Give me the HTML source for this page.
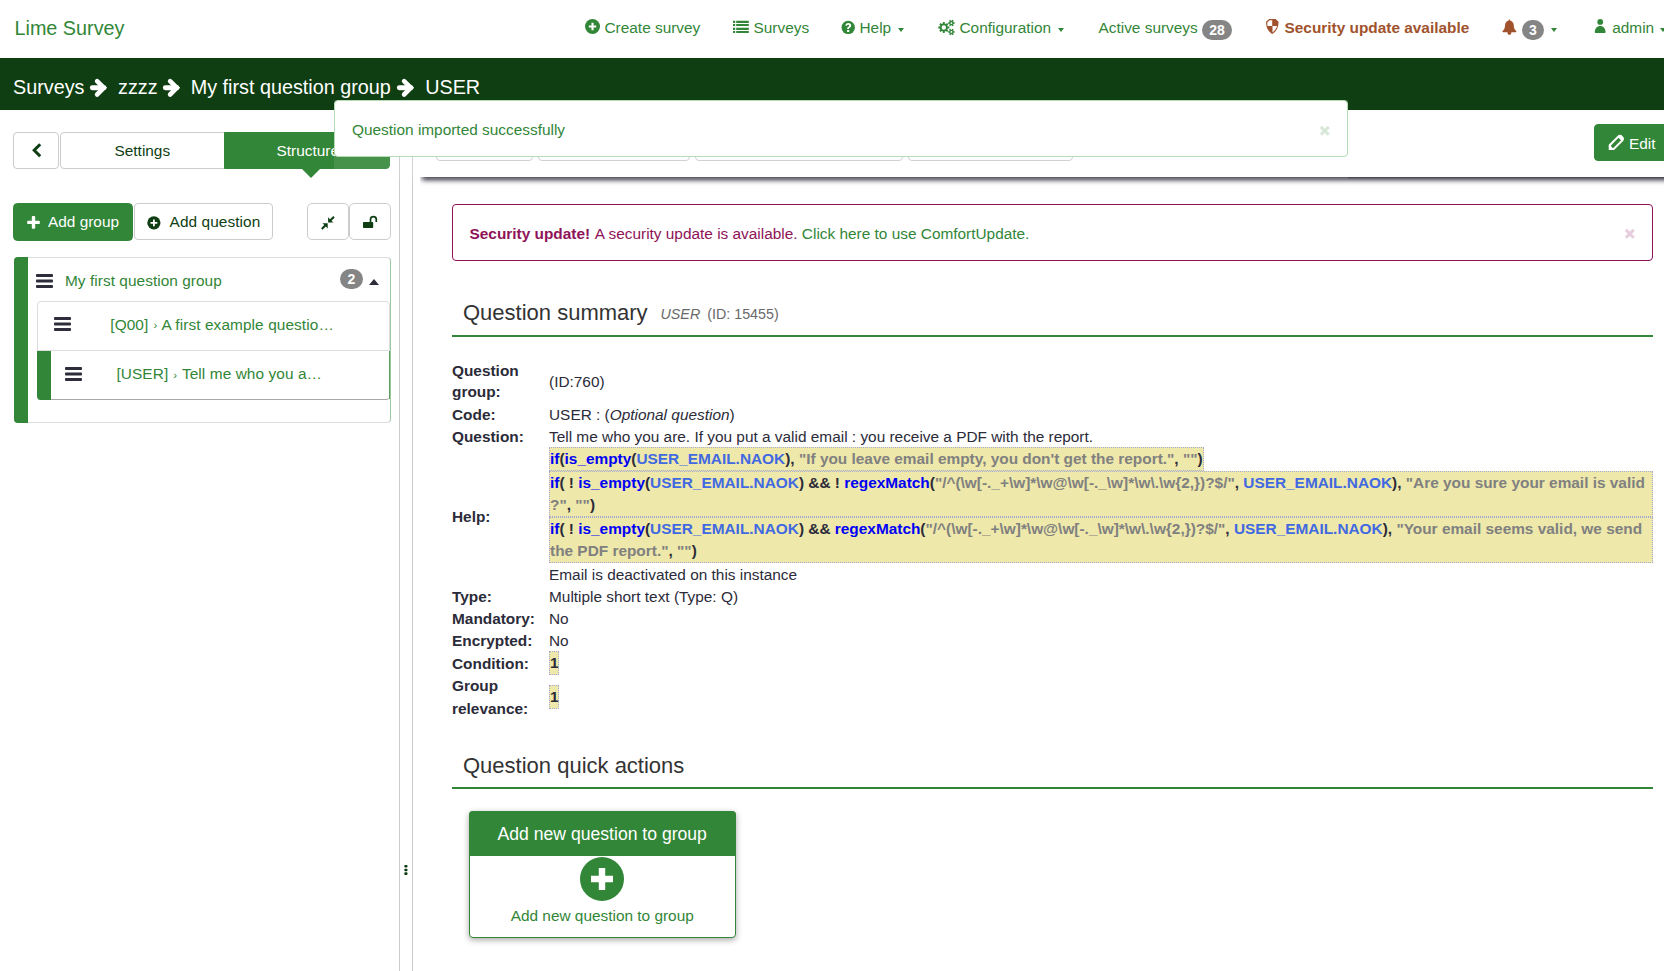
<!DOCTYPE html>
<html lang="en">
<head>
<meta charset="utf-8">
<title>LimeSurvey - Question summary</title>
<style>
*{box-sizing:border-box;margin:0;padding:0}
html,body{width:1664px;height:971px;overflow:hidden;background:#fff}
body{font-family:"Liberation Sans",sans-serif;font-size:15.4px;line-height:22px;color:#2b2b39;position:relative}
svg{display:block;position:absolute;overflow:visible}
.t{position:absolute;white-space:nowrap}
/* navbar */
#nav{position:absolute;left:0;top:0;width:1664px;height:58px;background:#fff;color:#328637}
#nav #brand{left:14px;top:15px;font-size:19.8px;line-height:26px}
#nav .t{top:17px;margin-left:.5px}
.badge{position:absolute;background:#858585;color:#fff;border-radius:10px;font-size:14px;line-height:21px;height:20px;font-weight:bold;text-align:center}
.caret{position:absolute;width:0;height:0;border-left:3.700px solid transparent;border-right:3.700px solid transparent;border-top:4.300px solid #328637}
.sec{color:#a0522d;font-weight:bold}
/* breadcrumb */
#bc{position:absolute;left:0;top:58px;width:1664px;height:52px;background:#0f3e12;color:#fff;font-size:19.8px;line-height:26px}
#bc .t{top:16px}
/* sidebar */
#side{position:absolute;left:0;top:110px;width:400px;height:861px;background:#fff;border-right:1px solid #ccc}
#handle{position:absolute;left:400px;top:110px;width:13px;height:861px;background:#fff;border-right:1px solid #ccc}
.btn{position:absolute;border:1px solid #ccc;border-radius:4px;background:#fff;color:#0f3e12;text-align:center;white-space:nowrap}
.btn.g{background:#328637;border-color:#328637;color:#fff}
.gr{color:#328637}
/* main */
#tbwrap{position:absolute;left:420px;top:110px;width:1245px;height:82px;overflow:hidden}
#topbar{position:absolute;left:0;top:0;width:1300px;height:66.700px;background:#fff;box-shadow:2px 3px 5px 0 #2b2b39}

.tb{position:absolute;top:14px;height:37px;border:1px solid #ccc;border-radius:4px;background:#fff}
#secalert{position:absolute;left:452px;top:204px;width:1201px;height:57px;border:1px solid #8e1358;border-radius:4px;background:#fff;color:#8e1358}
h3.pt{position:absolute;left:452px;width:1200.500px;border-bottom:2px solid #328637;font-weight:normal;font-size:22px;line-height:30px;height:47px;color:#333;white-space:nowrap}
h3.pt span{position:absolute;white-space:nowrap}
.lbl{position:absolute;left:452px;font-weight:bold;white-space:nowrap}
.val{position:absolute;left:549px;white-space:nowrap}
.em{position:absolute;left:549px;background:#eee8aa;border:1px dotted #a6a9cf;font-weight:bold;white-space:nowrap;line-height:22px;color:#2b2b39}
.em .f{color:#0000f5}.em .v{color:#4169e1}.em .s{color:#808080}
#card{position:absolute;left:469px;top:811px;width:266.500px;height:126.500px;border:1px solid #328637;border-radius:4px;background:#fff;box-shadow:0 2px 6px rgba(0,0,0,.35)}
#card .hd{position:absolute;left:-1px;top:-1px;width:266.500px;height:45px;background:#328637;border-radius:4px 4px 0 0;color:#fff;font-size:17.600px;line-height:25px;text-align:center;padding-top:11px}
#notifwrap{position:absolute;left:334px;top:100px;width:1014px;height:78.500px;background:rgba(255,255,255,.1)}
#notif{position:absolute;left:0;top:0;width:1014px;height:56.500px;background:#fff;border:1px solid #b4dbb6;border-radius:4px;color:#328637}
.sm{font-size:11.500px;margin:0 .65px;position:relative;top:-.5px}
</style>
</head>
<body>
<!-- ============ NAVBAR ============ -->
<div id="nav">
  <div class="t" id="brand">Lime Survey</div>

  <!-- create survey -->
  <svg style="left:585px;top:19px" width="15" height="15" viewBox="0 0 15 15"><circle cx="7.5" cy="7.45" r="7.5" fill="#328637"/><path d="M3.8 6.45h2.65V3.75h2.1v2.7h2.65v2h-2.65v2.7h-2.1v-2.7H3.8z" fill="#fff"/></svg>
  <div class="t" style="left:604px">Create survey</div>
  <!-- surveys -->
  <svg style="left:733px;top:20px" width="16" height="14" viewBox="0 0 16 14"><path fill="#328637" d="M0 .8h2.2v2.1H0zM3.2 .8h12.6v2.1H3.2zM0 4h2.2v2.1H0zM3.2 4h12.6v2.1H3.2zM0 7.8h2.2v2.1H0zM3.2 7.8h12.6v2.1H3.2zM0 11h2.2v2.1H0zM3.2 11h12.6v2.1H3.2z"/></svg>
  <div class="t" style="left:753px">Surveys</div>
  <!-- help -->
  <svg style="left:841px;top:20px" width="14" height="15" viewBox="0 0 14 15"><circle cx="7.2" cy="7.4" r="6.7" fill="#328637"/><path fill="#fff" d="M4.3 5.6C4.5 4 5.6 3.1 7.3 3.1c1.7 0 2.9 1 2.9 2.4 0 1-.5 1.6-1.4 2.2-.7.5-.8.7-.8 1.4H6.2c-.1-1.2.2-1.7 1.1-2.3.6-.4.9-.7.9-1.2 0-.5-.4-.9-1-.9-.7 0-1.100.4-1.200 1.100zM6.100 10.100h2.100v1.800H6.100z"/></svg>
  <div class="t" style="left:859px">Help</div>
  <div class="caret" style="left:898.200px;top:27.600px"></div>
  <!-- configuration -->
  <svg style="left:938px;top:20px" width="17" height="16" viewBox="0 0 17 16"><path fill="#328637" fill-rule="evenodd" d="M9.78 6.50 L11.33 6.62 L11.33 8.38 L9.78 8.50 L9.32 9.61 L10.33 10.79 L9.09 12.03 L7.91 11.02 L6.80 11.48 L6.68 13.03 L4.92 13.03 L4.80 11.48 L3.69 11.02 L2.51 12.03 L1.27 10.79 L2.28 9.61 L1.82 8.50 L0.27 8.38 L0.27 6.62 L1.82 6.50 L2.28 5.39 L1.27 4.21 L2.51 2.97 L3.69 3.98 L4.80 3.52 L4.92 1.97 L6.68 1.97 L6.80 3.52 L7.91 3.98 L9.09 2.97 L10.33 4.21 L9.32 5.39Z M3.60 7.50 a2.20 2.20 0 1 0 4.40 0 a2.20 2.20 0 1 0 -4.40 0Z M15.58 2.36 L16.73 2.39 L16.73 3.81 L15.58 3.84 L15.13 4.62 L15.68 5.63 L14.45 6.33 L13.85 5.36 L12.95 5.36 L12.35 6.33 L11.12 5.63 L11.67 4.62 L11.22 3.84 L10.07 3.81 L10.07 2.39 L11.22 2.36 L11.67 1.58 L11.12 0.57 L12.35 -0.13 L12.95 0.84 L13.85 0.84 L14.45 -0.13 L15.68 0.57 L15.13 1.58Z M12.45 3.10 a0.95 0.95 0 1 0 1.90 0 a0.95 0.95 0 1 0 -1.90 0Z M15.58 11.16 L16.73 11.19 L16.73 12.61 L15.58 12.64 L15.13 13.42 L15.68 14.43 L14.45 15.13 L13.85 14.16 L12.95 14.16 L12.35 15.13 L11.12 14.43 L11.67 13.42 L11.22 12.64 L10.07 12.61 L10.07 11.19 L11.22 11.16 L11.67 10.38 L11.12 9.37 L12.35 8.67 L12.95 9.64 L13.85 9.64 L14.45 8.67 L15.68 9.37 L15.13 10.38Z M12.45 11.90 a0.95 0.95 0 1 0 1.90 0 a0.95 0.95 0 1 0 -1.90 0Z"/></svg>
  <div class="t" style="left:959px">Configuration</div>
  <div class="caret" style="left:1057.700px;top:27.600px"></div>
  <!-- active surveys -->
  <div class="t" style="left:1098px">Active surveys</div>
  <div class="badge" style="left:1202px;top:20px;width:30px">28</div>
  <!-- security -->
  <svg style="left:1266px;top:19px" width="13" height="15" viewBox="0 0 13 15"><path fill="#a0522d" fill-rule="evenodd" d="M3.100 0H9.600L12.500 2.700C12.700 8.500 10.300 12.800 6.300 14.900 2.300 12.800-.1 8.500.1 2.700zM6.200 1.300H3.600L1.300 3.400C1.300 4.600 1.350 5.800 1.500 6.900H6.200zM6.500 7.100V13.400C8.900 11.800 10.400 9.700 11.100 7.100z"/></svg>
  <div class="t sec" style="left:1284px">Security update available</div>
  <!-- bell -->
  <svg style="left:1502px;top:19px" width="15" height="16" viewBox="0 0 15 16"><path fill="#a0522d" d="M7.400.5c.5 0 .9.400.9.900v.3c2.200.5 3.500 2.300 3.500 4.700 0 2.800.9 4.300 2.300 5.400.5.400.3 1.400-.5 1.400H1.200c-.8 0-1-1-.5-1.400C2.100 10.700 3 9.200 3 6.400 3 4 4.300 2.200 6.500 1.700v-.3c0-.5.400-.9.900-.9zM5.500 13.100h3.800v.8c0 1.100-.8 1.900-1.900 1.900s-1.900-.8-1.900-1.900z"/></svg>
  <div class="badge" style="left:1522px;top:20px;width:22px">3</div>
  <div class="caret" style="left:1551.300px;top:27.600px"></div>
  <!-- admin -->
  <svg style="left:1594px;top:19px" width="12" height="15" viewBox="0 0 12 15"><circle cx="6.200" cy="2.900" r="2.900" fill="#328637"/><path fill="#328637" d="M.8 13.100C.8 9.500 3 6.900 6.200 6.900s5.400 2.600 5.400 6.200c0 .6-.4 1-1 1H1.800c-.6 0-1-.4-1-1z"/></svg>
  <div class="t" style="left:1611.700px">admin</div>
  <div class="caret" style="left:1660.300px;top:27.600px"></div>
</div>
<!-- ============ BREADCRUMB ============ -->
<div id="bc">
  <div class="t" style="left:13px">Surveys</div>
  <svg style="left:89px;top:20px" width="19" height="20" viewBox="0 0 19 20"><path d="M3.3 9.8H15" stroke="#fff" stroke-width="4.9" stroke-linecap="round" fill="none"/><path d="M8.1 3.1L14.8 9.8 8.1 16.5" stroke="#fff" stroke-width="4.6" stroke-linecap="round" stroke-linejoin="miter" fill="none"/></svg>
  <div class="t" style="left:118px">zzzz</div>
  <svg style="left:162.100px;top:20px" width="19" height="20" viewBox="0 0 19 20"><path d="M3.3 9.8H15" stroke="#fff" stroke-width="4.9" stroke-linecap="round" fill="none"/><path d="M8.1 3.1L14.8 9.8 8.1 16.5" stroke="#fff" stroke-width="4.6" stroke-linecap="round" stroke-linejoin="miter" fill="none"/></svg>
  <div class="t" style="left:190.700px">My first question group</div>
  <svg style="left:396.300px;top:20px" width="19" height="20" viewBox="0 0 19 20"><path d="M3.3 9.8H15" stroke="#fff" stroke-width="4.9" stroke-linecap="round" fill="none"/><path d="M8.1 3.1L14.8 9.8 8.1 16.5" stroke="#fff" stroke-width="4.6" stroke-linecap="round" stroke-linejoin="miter" fill="none"/></svg>
  <div class="t" style="left:425.200px">USER</div>
</div>
<!-- ============ SIDEBAR ============ -->
<div id="side">
  <!-- top buttons (coords relative to #side: y-110) -->
  <div class="btn" style="left:13px;top:22px;width:45.900px;height:36.800px"></div>
  <svg style="left:31px;top:32px" width="12" height="16" viewBox="0 0 12 16"><path d="M9.200 2.200L3.200 8.200 9.200 14.200" fill="none" stroke="#0f3e12" stroke-width="3" stroke-linejoin="miter"/></svg>
  <div class="btn" style="left:59.700px;top:22px;width:165px;height:36.800px;border-radius:4px 0 0 4px"></div>
  <div class="t" style="left:114.500px;top:29.500px;color:#0f3e12">Settings</div>
  <div class="btn g" style="left:224px;top:22px;width:166.200px;height:36.800px;border-radius:0 4px 4px 0"></div>
  <div style="position:absolute;left:302px;top:58.700px;width:0;height:0;border-left:9.300px solid transparent;border-right:9.300px solid transparent;border-top:9px solid #328637"></div>
  <div class="t" style="left:276.500px;top:29.500px;color:#fff">Structure</div>
  <!-- add buttons -->
  <div class="btn g" style="left:13px;top:93px;width:120px;height:37.600px;border-radius:4.500px"></div>
  <svg style="left:27px;top:106px" width="13" height="13" viewBox="0 0 13 13"><path fill="#fff" d="M4.800 1c0-.5.400-.9.900-.9h1.600c.5 0 .9.400.9.900V4.700h3.700c.5 0 .9.400.9.900v1.600c0 .5-.4.900-.9.900H8.200v3.700c0 .5-.4.900-.9.900H5.700c-.5 0-.9-.4-.9-.9V8.100H1.100c-.5 0-.9-.4-.9-.9V5.600c0-.5.400-.9.900-.9H4.800z"/></svg>
  <div class="t" style="left:48px;top:101px;color:#fff">Add group</div>
  <div class="btn" style="left:134px;top:93.300px;width:139px;height:37px"></div>
  <svg style="left:147px;top:105.500px" width="14" height="14" viewBox="0 0 14 14"><circle cx="6.900" cy="6.800" r="6.600" fill="#0f3e12"/><path fill="#fff" d="M3.500 5.900h2.500V3.400h1.800v2.500h2.500v1.800H7.800v2.500H6V7.700H3.500z"/></svg>
  <div class="t" style="left:169.600px;top:101px;color:#0f3e12;letter-spacing:.08px">Add question</div>
  <div class="btn" style="left:307px;top:93.300px;width:41.500px;height:37px;border-radius:5px"></div>
  <svg style="left:321px;top:105.500px" width="14" height="14" viewBox="0 0 14 14"><g fill="#0f3e12"><path d="M12.300.1l1.400 1.400L10.500 4.700 12.300 6.500H7.100V1.300l1.900 1.900z"/><path d="M1.500 13.700L.1 12.300 3.300 9.100 1.500 7.300H6.700V12.500l-1.900-1.900z"/></g></svg>
  <div class="btn" style="left:348.500px;top:93.300px;width:42.500px;height:37px;border-radius:5px"></div>
  <svg style="left:362px;top:105px" width="16" height="14" viewBox="0 0 16 14"><rect x="1" y="6.900" width="10.200" height="6.100" rx=".8" fill="#0f3e12"/><path d="M8.500 7V4.500c0-1.700 1.300-2.900 2.900-2.900s2.900 1.200 2.900 2.900V7" fill="none" stroke="#0f3e12" stroke-width="1.700"/></svg>
  <!-- group panel -->
  <div style="position:absolute;left:14px;top:147.200px;width:376.700px;height:166.300px;border:1px solid #ddd;border-right-color:#9cc89e;border-radius:4px;background:#fff"></div>
  <div style="position:absolute;left:14px;top:147.200px;width:14px;height:166.300px;background:#328637;border-radius:4px 0 0 4px"></div>
  <svg style="left:36.2px;top:164.1px" width="18" height="15" viewBox="0 0 18 15"><path fill="#2d2d3b" d="M.9 0h15.200a.9.900 0 0 1 .9.900v1.100a.9.900 0 0 1-.9.900H.9a.9.900 0 0 1-.9-.9V.9A.9.900 0 0 1 .9 0zM.9 5.500h15.200a.9.900 0 0 1 .9.900v1.100a.9.900 0 0 1-.9.900H.9a.9.900 0 0 1-.9-.9V6.400a.9.900 0 0 1 .9-.9zM.9 11.100h15.200a.9.900 0 0 1 .9.900v1.100a.9.900 0 0 1-.9.900H.9a.9.900 0 0 1-.9-.9V12a.9.900 0 0 1 .9-.9z"/></svg>
  <div class="t gr" style="left:65px;top:159.700px;letter-spacing:.05px">My first question group</div>
  <div class="badge" style="left:340px;top:159px;width:23px">2</div>
  <div style="position:absolute;left:368.600px;top:168.600px;width:0;height:0;border-left:5.900px solid transparent;border-right:5.900px solid transparent;border-bottom:6.700px solid #2d2d3b"></div>
  <div style="position:absolute;left:36.500px;top:191.200px;width:353.500px;height:50px;border:1px solid #ddd;border-radius:4px 4px 0 0;background:#fff"></div>
  <svg style="left:53.7px;top:207.1px" width="18" height="15" viewBox="0 0 18 15"><path fill="#2d2d3b" d="M.9 0h15.200a.9.900 0 0 1 .9.900v1.100a.9.900 0 0 1-.9.900H.9a.9.900 0 0 1-.9-.9V.9A.9.900 0 0 1 .9 0zM.9 5.500h15.200a.9.900 0 0 1 .9.900v1.100a.9.900 0 0 1-.9.900H.9a.9.900 0 0 1-.9-.9V6.400a.9.900 0 0 1 .9-.9zM.9 11.100h15.200a.9.900 0 0 1 .9.900v1.100a.9.900 0 0 1-.9.900H.9a.9.900 0 0 1-.9-.9V12a.9.900 0 0 1 .9-.9z"/></svg>
  <div class="t gr" style="left:110.300px;top:203.700px;letter-spacing:.09px">[Q00] <span class="sm">›</span> A first example questio…</div>
  <div style="position:absolute;left:36.500px;top:240.200px;width:353.500px;height:50px;border:1px solid #ddd;border-bottom:1px solid #a8a8a8;border-radius:0 0 4px 4px;background:#fff"></div>
  <div style="position:absolute;left:36.500px;top:240.700px;width:14.300px;height:49.500px;background:#328637;border-radius:0 0 0 4px"></div>
  <div style="position:absolute;left:389px;top:241px;width:1px;height:48px;background:#5aa05e"></div>
  <svg style="left:64.9px;top:257px" width="18" height="15" viewBox="0 0 18 15"><path fill="#2d2d3b" d="M.9 0h15.200a.9.900 0 0 1 .9.900v1.100a.9.900 0 0 1-.9.900H.9a.9.900 0 0 1-.9-.9V.9A.9.900 0 0 1 .9 0zM.9 5.500h15.200a.9.900 0 0 1 .9.900v1.100a.9.900 0 0 1-.9.900H.9a.9.900 0 0 1-.9-.9V6.400a.9.900 0 0 1 .9-.9zM.9 11.100h15.200a.9.900 0 0 1 .9.900v1.100a.9.900 0 0 1-.9.900H.9a.9.900 0 0 1-.9-.9V12a.9.900 0 0 1 .9-.9z"/></svg>
  <div class="t gr" style="left:116.400px;top:253.200px;letter-spacing:.09px">[USER] <span class="sm">›</span> Tell me who you a…</div>
</div>
<div id="handle"></div>
<!-- ============ MAIN ============ -->
<div id="tbwrap"><div id="topbar">
  <div class="tb" style="left:16px;width:97px"></div>
  <div class="tb" style="left:118px;width:152px"></div>
  <div class="tb" style="left:275px;width:207.500px"></div>
  <div class="tb" style="left:488px;width:165px"></div>
  <div class="btn g" style="left:1174.200px;top:14px;width:80px;height:37px"></div>
  <svg style="left:1188px;top:25px" width="16" height="16" viewBox="0 0 16 16"><path fill="#fff" fill-rule="evenodd" d="M.7 15.100V9.730L9.260 1.160A3.800 3.800 0 0 1 14.640 6.540L6.070 15.100zM3.170 10.170L10.520 2.820 12.990 5.290 5.640 12.640 4.400 12.900 3.900 11.700 2.900 11.400z"/></svg>
  <div class="t" style="left:1209px;top:22.500px;color:#fff">Edit</div>
</div></div>
<div id="main">
  <div id="secalert">
    <div class="t" style="left:16.500px;top:17.500px"><b style="margin-right:1.300px">Security update!</b> A security update is available. <span class="gr">Click here to use ComfortUpdate.</span></div>
    <svg style="left:1170.800px;top:23px" width="12" height="12" viewBox="0 0 12 12"><path d="M1.900 1.900L9.700 9.700M9.700 1.900L1.900 9.700" stroke="#8e1358" stroke-opacity=".21" stroke-width="2.900" fill="none"/></svg>
  </div>
  <h3 class="pt" style="top:289.800px"><span style="left:11px;top:8px">Question summary</span><span style="left:208.500px;top:9.500px;font-size:14.300px;font-style:italic;color:#6a6a6a">USER</span><span style="left:255.200px;top:9.500px;font-size:14.300px;color:#6a6a6a">(ID: 15455)</span></h3>
  <!-- summary table -->
  <div class="lbl" style="top:360px">Question</div>
  <div class="lbl" style="top:381px">group:</div>
  <div class="val" style="top:371px">(ID:760)</div>
  <div class="lbl" style="top:403.700px">Code:</div>
  <div class="val" style="top:403.700px">USER : (<i>Optional question</i>)</div>
  <div class="lbl" style="top:426px">Question:</div>
  <div class="val" style="top:426px">Tell me who you are. If you put a valid email : you receive a PDF with the report.</div>
  <div class="em" style="top:447.300px;padding-right:.8px"><span class="f">if</span>(<span class="f">is_empty</span>(<span class="v">USER_EMAIL.NAOK</span>), <span class="s">"If you leave email empty, you don't get the report."</span>, <span class="s">""</span>)</div>
  <div class="em" style="top:471.100px;width:1104px"><span class="f">if</span>( ! <span class="f">is_empty</span>(<span class="v">USER_EMAIL.NAOK</span>) &amp;&amp; ! <span class="f">regexMatch</span>(<span class="s">"/^(\w[-._+\w]*\w@\w[-._\w]*\w\.\w{2,})?$/"</span>, <span class="v">USER_EMAIL.NAOK</span>), <span class="s">"Are you sure your email is valid</span><br><span class="s">?"</span>, <span class="s">""</span>)</div>
  <div class="em" style="top:517.100px;width:1104px"><span class="f">if</span>( ! <span class="f">is_empty</span>(<span class="v">USER_EMAIL.NAOK</span>) &amp;&amp; <span class="f">regexMatch</span>(<span class="s">"/^(\w[-._+\w]*\w@\w[-._\w]*\w\.\w{2,})?$/"</span>, <span class="v">USER_EMAIL.NAOK</span>), <span class="s">"Your email seems valid, we send</span><br><span class="s">the PDF report."</span>, <span class="s">""</span>)</div>
  <div class="lbl" style="top:505.500px">Help:</div>
  <div class="val" style="top:563.700px">Email is deactivated on this instance</div>
  <div class="lbl" style="top:586px">Type:</div>
  <div class="val" style="top:586px">Multiple short text (Type: Q)</div>
  <div class="lbl" style="top:607.800px">Mandatory:</div>
  <div class="val" style="top:607.800px">No</div>
  <div class="lbl" style="top:630.200px">Encrypted:</div>
  <div class="val" style="top:630.200px">No</div>
  <div class="lbl" style="top:652.600px">Condition:</div>
  <div class="em" style="top:650.500px;width:10px">1</div>
  <div class="lbl" style="top:675.300px">Group</div>
  <div class="lbl" style="top:697.600px">relevance:</div>
  <div class="em" style="top:684.500px;width:10px">1</div>
  <h3 class="pt" style="top:741.500px"><span style="left:11px;top:9px">Question quick actions</span></h3>
  <div id="card">
    <div class="hd">Add new question to group</div>
    <svg style="left:110px;top:45px" width="44" height="44" viewBox="0 0 44 44"><circle cx="22" cy="22" r="22" fill="#328637"/><path fill="#fff" d="M18.800 11h6.400v7.800H33v6.400h-7.800V33h-6.400v-7.800H11v-6.400h7.800z"/></svg>
    <div class="t gr" style="left:0;width:264.500px;text-align:center;top:93px">Add new question to group</div>
  </div>
  <svg style="left:404px;top:865px" width="4" height="11" viewBox="0 0 4 11"><g fill="#0a3a0e"><rect x=".3" y="0" width="3.200" height="2.500" rx="1"/><rect x=".3" y="3.800" width="3.200" height="2.400" rx="1"/><rect x=".3" y="7.300" width="3.200" height="2.700" rx="1"/></g></svg>
</div>
<!-- ============ NOTIFICATION ============ -->
<div id="notifwrap"><div id="notif">
  <div class="t" style="left:17px;top:18px">Question imported successfully</div>
  <svg style="left:983.900px;top:23.800px" width="12" height="12" viewBox="0 0 12 12"><path d="M1.900 1.900L9.700 9.700M9.700 1.900L1.900 9.700" stroke="#328637" stroke-opacity=".2" stroke-width="2.900" fill="none"/></svg>
</div></div>
</body>
</html>
